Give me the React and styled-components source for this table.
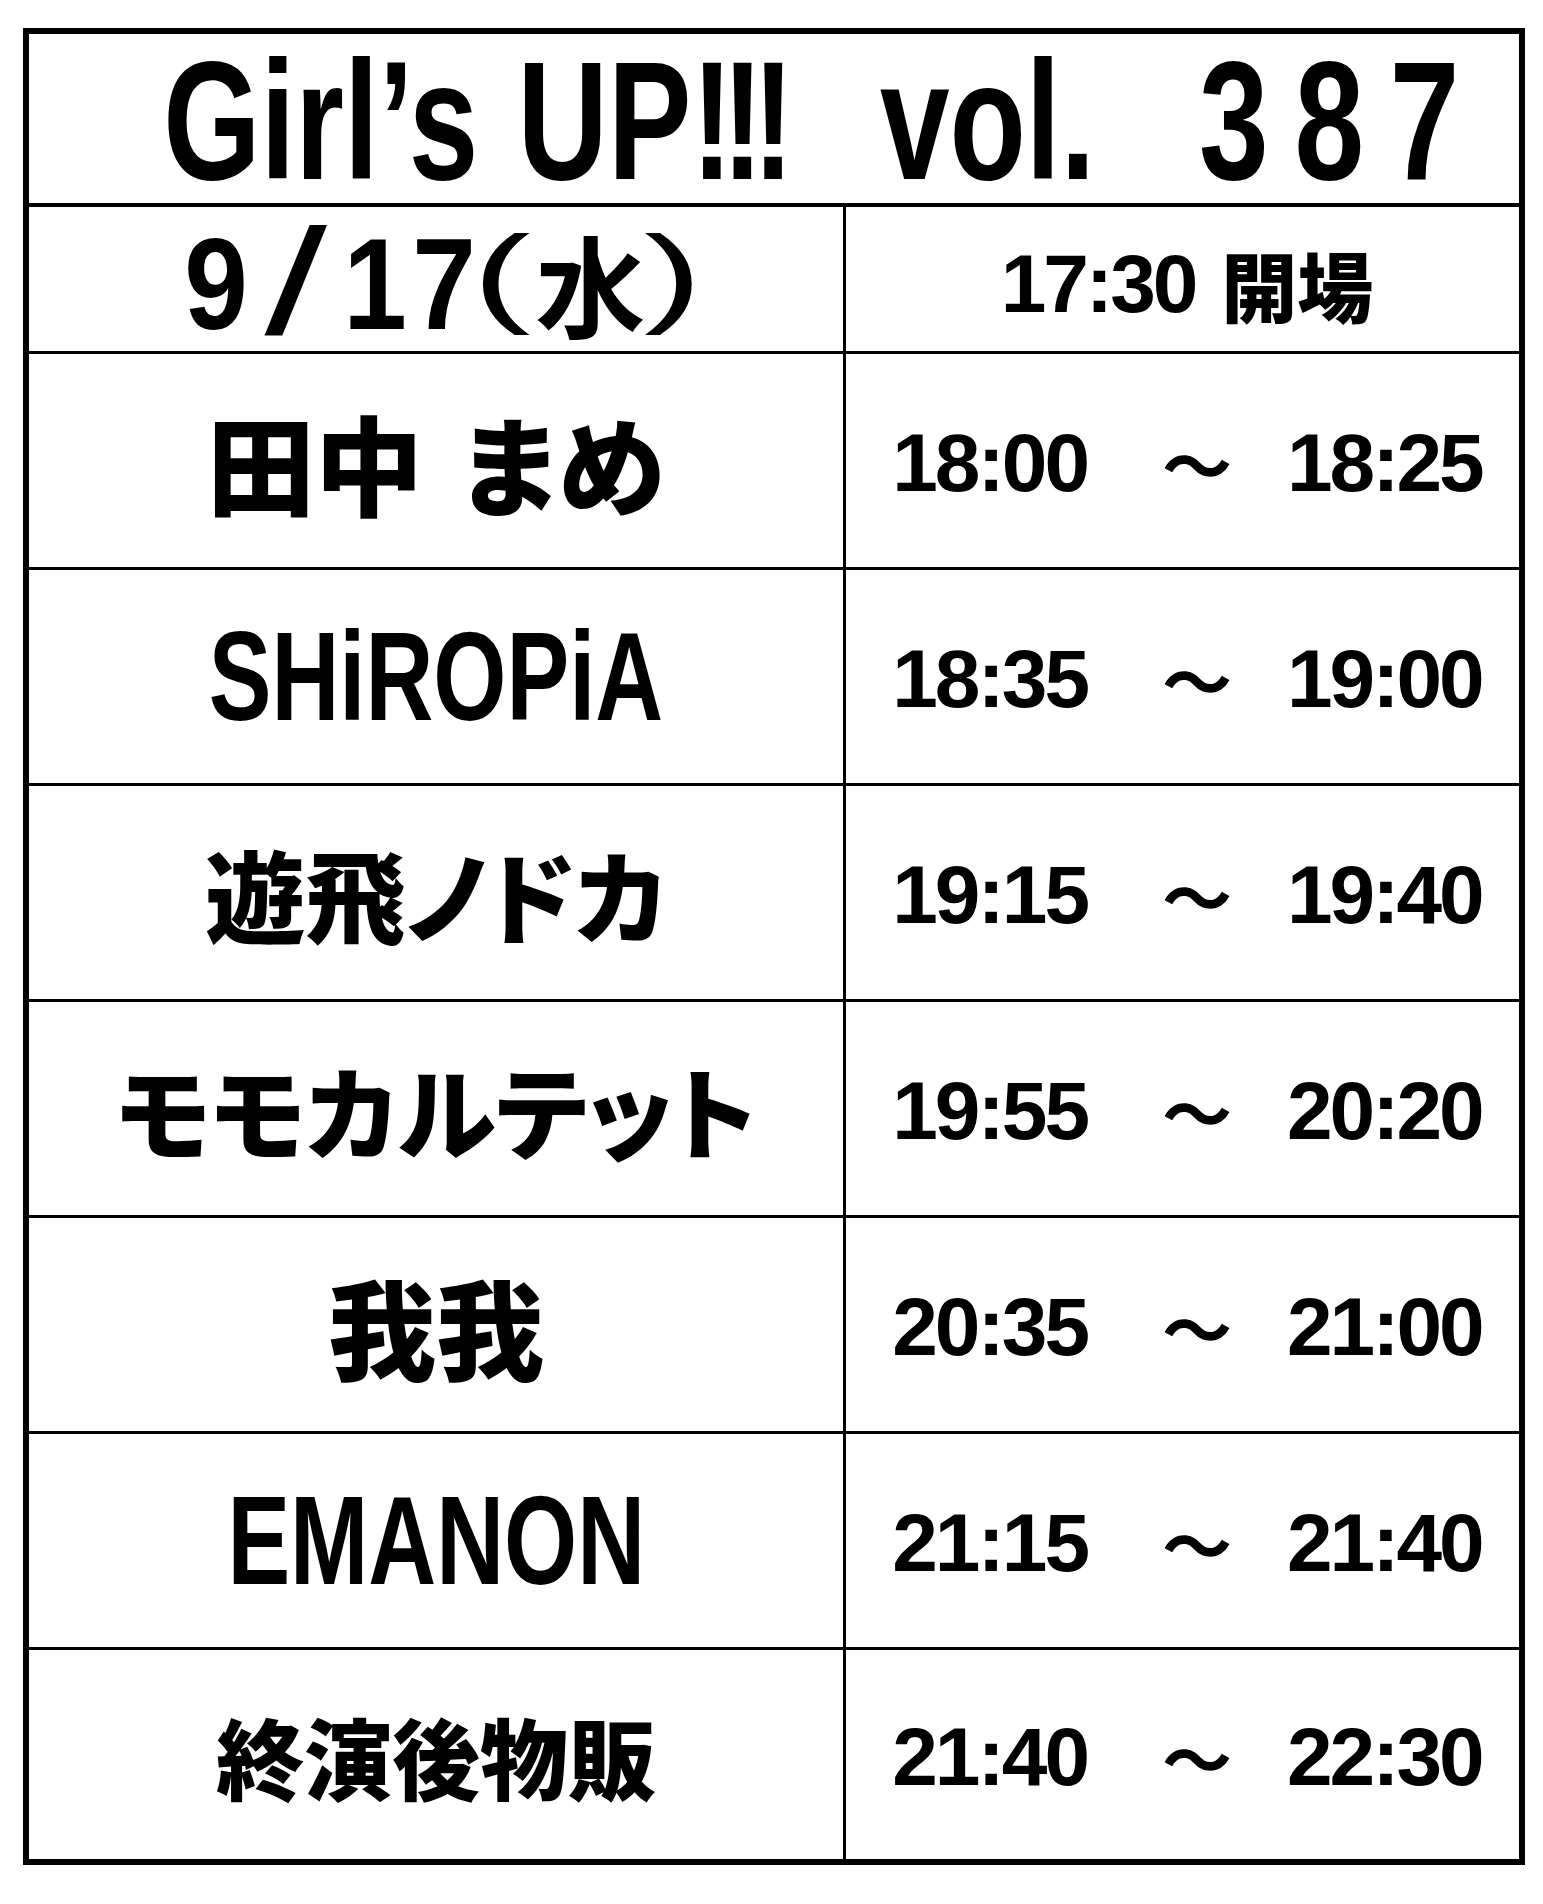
import styled, { createGlobalStyle } from 'styled-components';

const schedule = [
    { name: '田中 まめ', start: '18:00', end: '18:25', size: 108 },
    { name: 'SHiROPiA', start: '18:35', end: '19:00', latin: true },
    { name: '遊飛ノドカ', start: '19:15', end: '19:40', size: 100 },
    { name: 'モモカルテット', start: '19:55', end: '20:20', size: 100 },
    { name: '我我', start: '20:35', end: '21:00', size: 108 },
    { name: 'EMANON', start: '21:15', end: '21:40', latin: true },
    { name: '終演後物販', start: '21:40', end: '22:30', size: 88 },
];

export default function App() {
    return (
        <>
            <GlobalStyle />
            <Page>
                <Board>
                    <TitleRow>
                        <TitleText>
                            <Word>Girl’s</Word>
                            <Word $gap={53}>
                                UP<Bangs>!!!</Bangs>
                            </Word>
                            <Word $gap={131}>vol.</Word>
                            <Word $gap={140} $tracking={35}>
                                387
                            </Word>
                        </TitleText>
                    </TitleRow>

                    <DateRow>
                        <NameCell>
                            <DateNum>9</DateNum>
                            <Slash>/</Slash>
                            <DateNum>1</DateNum>
                            <DateNum $gap={-3}>7</DateNum>
                            <Paren $gap={2}>(</Paren>
                            <Week>水</Week>
                            <Paren $gap={10}>)</Paren>
                        </NameCell>
                        <TimeCell>
                            <Clock>17:30</Clock>
                            <Kanji>開場</Kanji>
                        </TimeCell>
                    </DateRow>

                    {schedule.map((act) => (
                        <Row key={act.name}>
                            <NameCell>
                                {act.latin ? (
                                    <LatinName>{act.name}</LatinName>
                                ) : (
                                    <Name $size={act.size}>{act.name}</Name>
                                )}
                            </NameCell>
                            <TimeCell>
                                <Clock>{act.start}</Clock>
                                <Tilde>～</Tilde>
                                <Clock>{act.end}</Clock>
                            </TimeCell>
                        </Row>
                    ))}
                </Board>
            </Page>
        </>
    );
}

const GlobalStyle = createGlobalStyle`
    body {
        margin: 0;
        background: #fff;
        color: #000;
    }
`;

const Page = styled.div`
    padding: 28px 0 0 23px;
    min-height: 1904px;
    box-sizing: border-box;
`;

const Board = styled.div`
    width: 1502px;
    box-sizing: border-box;
    border: 6px solid #000;
`;

const TitleRow = styled.div`
    height: 169px;
    border-bottom: 4px solid #000;
    display: flex;
    align-items: center;
    justify-content: center;
    padding-left: 100px;
`;

const TitleText = styled.div`
    display: inline-block;
    margin: 0 -260px;
    padding-top: 4px;
    font-family: 'Liberation Sans', Arial, sans-serif;
    font-weight: 700;
    font-size: 169px;
    line-height: 1;
    white-space: nowrap;
    transform: scaleX(0.74);
`;

const Word = styled.span`
    margin-left: ${(p) => p.$gap || 0}px;
    letter-spacing: ${(p) => p.$tracking || 0}px;
`;

const Bangs = styled.span`
    letter-spacing: -15px;
`;

const DateRow = styled.div`
    display: grid;
    grid-template-columns: 817px 670px;
    height: 144px;
    border-bottom: 3px solid #000;
`;

const Row = styled.div`
    display: grid;
    grid-template-columns: 817px 670px;
    height: 213px;
    border-bottom: 3px solid #000;

    &:last-child {
        height: 209px;
        border-bottom: none;
    }
`;

const NameCell = styled.div`
    border-right: 3px solid #000;
    display: flex;
    align-items: center;
    justify-content: center;
    white-space: nowrap;
`;

const TimeCell = styled.div`
    display: flex;
    align-items: center;
    justify-content: center;
    white-space: nowrap;
    padding: 4px 0 0 12px;
`;

const DateNum = styled.span`
    display: inline-block;
    font-family: 'Liberation Sans', Arial, sans-serif;
    font-weight: 700;
    font-size: 130px;
    line-height: 1;
    margin: 4px 0 0 ${(p) => p.$gap || 0}px;
    transform: scaleX(0.88);
`;

const Slash = styled.span`
    display: inline-block;
    font-family: 'Liberation Sans', Arial, sans-serif;
    font-weight: 400;
    font-size: 150px;
    line-height: 1;
    margin: 0 22px 0 23px;
    transform: scaleX(1.5);
`;

const Paren = styled.span`
    display: inline-block;
    font-family: 'Liberation Sans', Arial, sans-serif;
    font-weight: 400;
    font-size: 110px;
    line-height: 1;
    margin: 0 0 16px ${(p) => p.$gap || 0}px;
    transform: scaleX(1.6);
`;

const Week = styled.span`
    font-family: 'Noto Sans CJK JP', sans-serif;
    font-weight: 700;
    font-size: 110px;
    line-height: 1;
    margin-left: 16px;
`;

const Name = styled.span`
    font-family: 'Noto Sans CJK JP', sans-serif;
    font-weight: 900;
    font-size: ${(p) => p.$size}px;
    line-height: 1;
    font-feature-settings: 'palt';
    word-spacing: 0.12em;
`;

const LatinName = styled.span`
    display: inline-block;
    font-family: 'Liberation Sans', Arial, sans-serif;
    font-weight: 700;
    font-size: 127px;
    line-height: 1;
    transform: scaleX(0.74);
`;

const Clock = styled.span`
    font-family: 'Liberation Sans', Arial, sans-serif;
    font-weight: 700;
    font-size: 82px;
    line-height: 1;
    letter-spacing: -3px;
`;

const Tilde = styled.span`
    font-family: 'Noto Sans CJK JP', sans-serif;
    font-weight: 700;
    font-size: 70px;
    line-height: 1;
    margin: 0 55px 0 75px;
`;

const Kanji = styled.span`
    font-family: 'Noto Sans CJK JP', sans-serif;
    font-weight: 900;
    font-size: 76px;
    line-height: 1;
    font-feature-settings: 'palt';
    margin-left: 26px;
`;
